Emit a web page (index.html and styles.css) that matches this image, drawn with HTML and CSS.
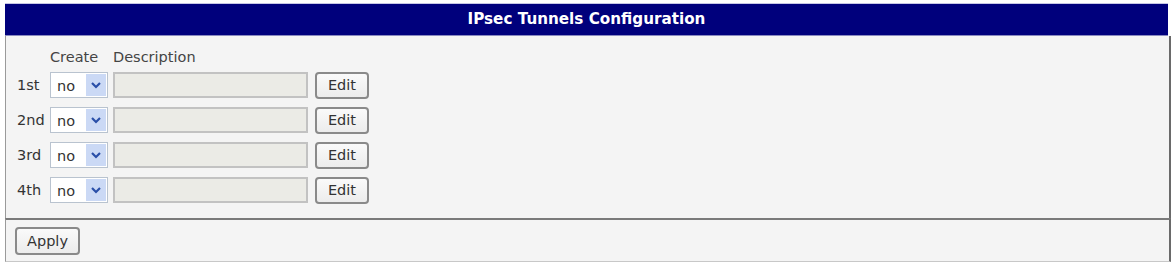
FILE: index.html
```html
<!DOCTYPE html>
<html>
<head>
<meta charset="utf-8">
<link rel="stylesheet" href="styles.css">
</head>
<body>
<div class="panel">
  <div class="title">IPsec Tunnels Configuration</div>
  <div class="content">
    <div class="heads">
      <div class="colhead create">Create</div>
      <div class="colhead">Description</div>
    </div>
    <div class="grid">
      <div class="lbl">1st</div>
      <div class="sel"><span class="val">no</span><span class="arrow"><svg width="12" height="8" viewBox="0 0 12 8"><path d="M2 2 L6 6 L10 2" fill="none" stroke="#2a4fa8" stroke-width="2.2"/></svg></span></div>
      <div class="inp"></div>
      <div class="btn">Edit</div>

      <div class="lbl">2nd</div>
      <div class="sel"><span class="val">no</span><span class="arrow"><svg width="12" height="8" viewBox="0 0 12 8"><path d="M2 2 L6 6 L10 2" fill="none" stroke="#2a4fa8" stroke-width="2.2"/></svg></span></div>
      <div class="inp"></div>
      <div class="btn">Edit</div>

      <div class="lbl">3rd</div>
      <div class="sel"><span class="val">no</span><span class="arrow"><svg width="12" height="8" viewBox="0 0 12 8"><path d="M2 2 L6 6 L10 2" fill="none" stroke="#2a4fa8" stroke-width="2.2"/></svg></span></div>
      <div class="inp"></div>
      <div class="btn">Edit</div>

      <div class="lbl">4th</div>
      <div class="sel"><span class="val">no</span><span class="arrow"><svg width="12" height="8" viewBox="0 0 12 8"><path d="M2 2 L6 6 L10 2" fill="none" stroke="#2a4fa8" stroke-width="2.2"/></svg></span></div>
      <div class="inp"></div>
      <div class="btn">Edit</div>
    </div>
  </div>
  <div class="footer">
    <div class="btn apply">Apply</div>
  </div>
</div>
</body>
</html>
```

FILE: styles.css
```css
html, body {
  margin: 0;
  padding: 0;
  background: #ffffff;
}
body {
  font-family: "DejaVu Sans", Verdana, sans-serif;
  font-size: 14.5px;
  color: #333333;
}
.panel {
  margin: 3px 0 0 5px;
  width: 1166px;
}
.title {
  height: 31px;
  border-top: 1px solid #c6c6e6;
  background: #00007c;
  color: #ffffff;
  font-weight: bold;
  font-size: 15.2px;
  line-height: 31px;
  text-align: center;
  border-bottom: 1px solid #8a8ac0;
  margin-right: 3px;
}
.content {
  background: #f4f4f4;
  border-left: 1px solid #9a9a9a;
  border-right: 2px solid #6a6a6a;
  height: 182px;
  box-sizing: border-box;
  padding: 12px 0 0 11px;
}
.heads {
  display: flex;
  height: 18px;
  line-height: 18px;
  padding-left: 33px;
}
.colhead {
  color: #444;
}
.colhead.create {
  width: 63px;
}
.grid {
  margin-top: 6px;
  display: grid;
  grid-template-columns: 33px 58px 200px 61px;
  grid-template-rows: repeat(4, 26px);
  row-gap: 9px;
  align-items: center;
}
.grid > .inp { margin-left: 5px; }
.grid > .btn { margin-left: 7px; }
.lbl {
  color: #333;
}
.sel {
  height: 26px;
  box-sizing: border-box;
  border: 1px solid #b9c3cf;
  background: #ffffff;
  display: flex;
  align-items: center;
  justify-content: space-between;
  padding: 1px;
}
.val {
  padding-left: 5px;
  padding-top: 2px;
}
.arrow {
  width: 20px;
  height: 22px;
  background: #cbd9f5;
  display: flex;
  align-items: center;
  justify-content: center;
}
.inp {
  height: 26px;
  width: 195px;
  box-sizing: border-box;
  border: 2px solid #c2c2c2;
  background: #ebebe6;
}
.btn {
  height: 27px;
  box-sizing: border-box;
  border: 2px solid #8a8a8a;
  border-radius: 4px;
  background: linear-gradient(#fafafa, #ececec);
  display: flex;
  align-items: center;
  justify-content: center;
  color: #333;
}
.footer {
  border-top: 2px solid #7a7a7a;
  border-left: 1px solid #9a9a9a;
  border-right: 2px solid #6a6a6a;
  border-bottom: 1px solid #c8c8c8;
  background: #f4f4f4;
  height: 44px;
  box-sizing: border-box;
  padding: 7px 0 0 9px;
}
.apply {
  width: 65px;
  height: 28px;
}
```
